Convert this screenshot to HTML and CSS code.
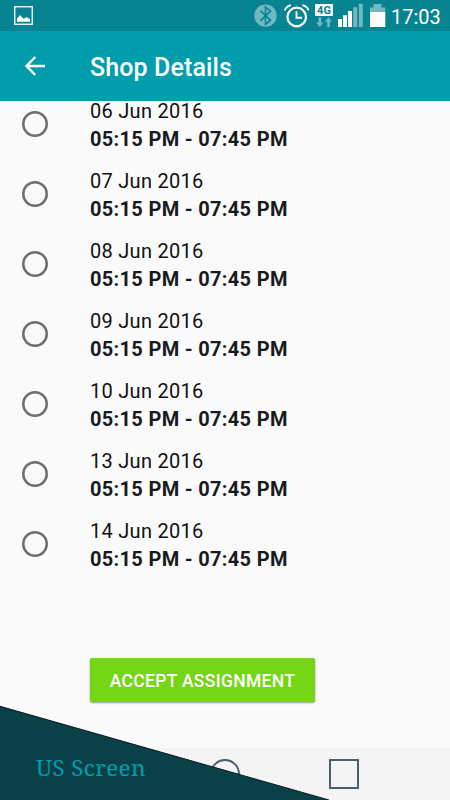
FILE: index.html
```
<!DOCTYPE html>
<html lang="en">
<head>
    <meta charset="UTF-8">
    <title>Shop Details</title>
    <link rel="stylesheet" href="styles.css">
</head>
<body>
    <div class="status-bar">
        <svg class="picture-icon" width="19" height="19" viewBox="0 0 19 19">
            <rect x="0.75" y="0.75" width="17.5" height="17.5" fill="none" stroke="#fff" stroke-width="1.3"/>
            <path d="M3 15.7v-3.2l2-2.2 1-1.3 2.4 2.7 1.5 1 1.6-1 1.2-.7 1.3 1.1 2 1.1v2.5z" fill="#fff"/>
        </svg>
        <!-- bluetooth, alarm, 4G, signal, battery -->
        <svg class="status-icons" width="132" height="31" viewBox="254 0 132 31">
            <circle cx="265.5" cy="15.7" r="11.2" fill="#6fb9c2"/>
            <path d="M260.5 10.8l10 9.4-5 4.3V7l5 4.2-10 9.4" fill="none" stroke="#078391" stroke-width="1.6"/>
            <g fill="none" stroke="#fff">
                <circle cx="296.7" cy="17" r="9.3" stroke-width="2.2"/>
                <path d="M296.5 11.3v6.4h5.5" stroke-width="1.9"/>
                <path d="M284.8 10.4c1-3 3-4.6 6.2-5.3M308.6 10.4c-1-3-3-4.6-6.2-5.3" stroke-width="1.8"/>
            </g>
            <rect x="315" y="4" width="18" height="12" rx="1" fill="#fff"/>
            <text class="network" x="324" y="13.8" text-anchor="middle">4G</text>
            <path d="M318.5 17.3h2.6v5.3h2.3l-3.6 4.4-3.7-4.4h2.4zM327.2 27h2.6v-5.3h2.3l-3.6-4.4-3.7 4.4h2.4z" fill="#6fb9c2"/>
            <path d="M338 19h4v8h-4zM343 15.2h4V27h-4zM348 11h4v16h-4z" fill="#fff"/>
            <path d="M353.2 7.3h4V27h-4zM358.8 3.7h4V27h-4z" fill="#6fb9c2"/>
            <path d="M373.5 4h8v3.5h3.8V12H370V7.5h3.5z" fill="#6fb9c2"/>
            <rect x="370" y="12" width="15.3" height="15" fill="#fff"/>
        </svg>
        <span class="clock">17:03</span>
    </div>

    <div class="app-bar">
        <svg class="back-icon" width="20" height="20" viewBox="0 0 20 20">
            <path d="M20 10H1.5M10.3 1L1.5 10l8.8 9" fill="none" stroke="#fff" stroke-width="2.4"/>
        </svg>
        <h1>Shop Details</h1>
    </div>

    <div class="content">
        <div class="slots">
            <div class="slot">
                <span class="radio"></span>
                <div>
                    <div class="date">06 Jun 2016</div>
                    <div class="time">05:15 PM - 07:45 PM</div>
                </div>
            </div>
            <div class="slot">
                <span class="radio"></span>
                <div>
                    <div class="date">07 Jun 2016</div>
                    <div class="time">05:15 PM - 07:45 PM</div>
                </div>
            </div>
            <div class="slot">
                <span class="radio"></span>
                <div>
                    <div class="date">08 Jun 2016</div>
                    <div class="time">05:15 PM - 07:45 PM</div>
                </div>
            </div>
            <div class="slot">
                <span class="radio"></span>
                <div>
                    <div class="date">09 Jun 2016</div>
                    <div class="time">05:15 PM - 07:45 PM</div>
                </div>
            </div>
            <div class="slot">
                <span class="radio"></span>
                <div>
                    <div class="date">10 Jun 2016</div>
                    <div class="time">05:15 PM - 07:45 PM</div>
                </div>
            </div>
            <div class="slot">
                <span class="radio"></span>
                <div>
                    <div class="date">13 Jun 2016</div>
                    <div class="time">05:15 PM - 07:45 PM</div>
                </div>
            </div>
            <div class="slot">
                <span class="radio"></span>
                <div>
                    <div class="date">14 Jun 2016</div>
                    <div class="time">05:15 PM - 07:45 PM</div>
                </div>
            </div>
        </div>
        <button class="button">ACCEPT ASSIGNMENT</button>
    </div>

    <div class="nav-bar">
        <span class="nav-home"></span>
        <span class="nav-recent"></span>
    </div>

    <div class="ribbon">
        <svg class="ribbon-shape" width="330" height="95" viewBox="0 0 330 95">
            <path d="M0 1.3L329 95H0z" fill="#0a4048"/>
            <path d="M0 1.3L329 95" stroke="#04191f" stroke-width="1"/>
        </svg>
        <span class="ribbon-text">US Screen</span>
    </div>
</body>
</html>
```
FILE: styles.css
```
/* Global Styles */
* {
    box-sizing: border-box;
}

body {
    font-family: Roboto, 'Liberation Sans', sans-serif;
    background-color: #fafafa;
    margin: 0;
    width: 450px;
    height: 800px;
    display: flex;
    flex-direction: column;
    position: relative;
    overflow: hidden;
}

svg {
    display: block;
}

/* Status Bar */
.status-bar {
    height: 31px;
    background-color: #078391;
    display: flex;
    align-items: center;
    padding-left: 14px;
    flex-shrink: 0;
}

.status-icons {
    margin-left: 221px;
}

.network {
    font-size: 11px;
    font-weight: bold;
    fill: #078391;
}

.clock {
    color: #fff;
    font-size: 20px;
    line-height: 31px;
    margin-left: 5px;
    padding-top: 3px;
}

/* App Bar */
.app-bar {
    height: 70px;
    background-color: #009dad;
    display: flex;
    align-items: center;
    padding-left: 25px;
    flex-shrink: 0;
}

.app-bar h1 {
    color: #fff;
    font-size: 25px;
    font-weight: 500;
    letter-spacing: 0.12px;
    margin: 2px 0 0 45px;
}

/* Time Slots */
.content {
    height: 647px;
    overflow: hidden;
    flex-shrink: 0;
}

.slots {
    margin-top: -12px;
}

.slot {
    height: 70px;
    display: flex;
    align-items: center;
    padding-left: 22px;
}

.radio {
    width: 26px;
    height: 26px;
    box-shadow: inset 0 0 0 2.5px #6f6f6f;
    border-radius: 50%;
    margin-right: 42px;
}

.date,
.time {
    padding-top: 1px;
    font-size: 20px;
    line-height: 27px;
    color: #111;
    letter-spacing: 0.28px;
}

.date {
    padding-top: 2px;
}

.time {
    font-weight: 700;
    color: #171a20;
    letter-spacing: 0.32px;
}

.button {
    display: block;
    width: 225px;
    height: 44px;
    margin: 79px 0 0 90px;
    padding: 2px 0 0;
    font-family: inherit;
    font-size: 17.5px;
    font-weight: 500;
    letter-spacing: 0.32px;
    color: #fff;
    background-color: #74d615;
    border: none;
    border-radius: 2px;
    box-shadow: 0 1px 2px rgba(0, 0, 0, 0.4);
}

/* Navigation Bar */
.nav-bar {
    height: 52px;
    background-color: #f4f4f4;
    display: flex;
    align-items: center;
    padding-left: 210px;
    flex-shrink: 0;
}

.nav-home,
.nav-recent {
    width: 30px;
    height: 30px;
    border: 2px solid #4a606b;
}

.nav-home {
    border-radius: 50%;
    margin-right: 89px;
}

/* Corner Ribbon */
.ribbon {
    position: absolute;
    left: 0;
    bottom: 0;
}

.ribbon-text {
    position: absolute;
    left: 36px;
    bottom: 16px;
    font-family: 'Noto Serif', 'DejaVu Serif', serif;
    font-size: 22.5px;
    line-height: 32px;
    letter-spacing: 0.35px;
    color: #009dad;
    white-space: nowrap;
}
```
